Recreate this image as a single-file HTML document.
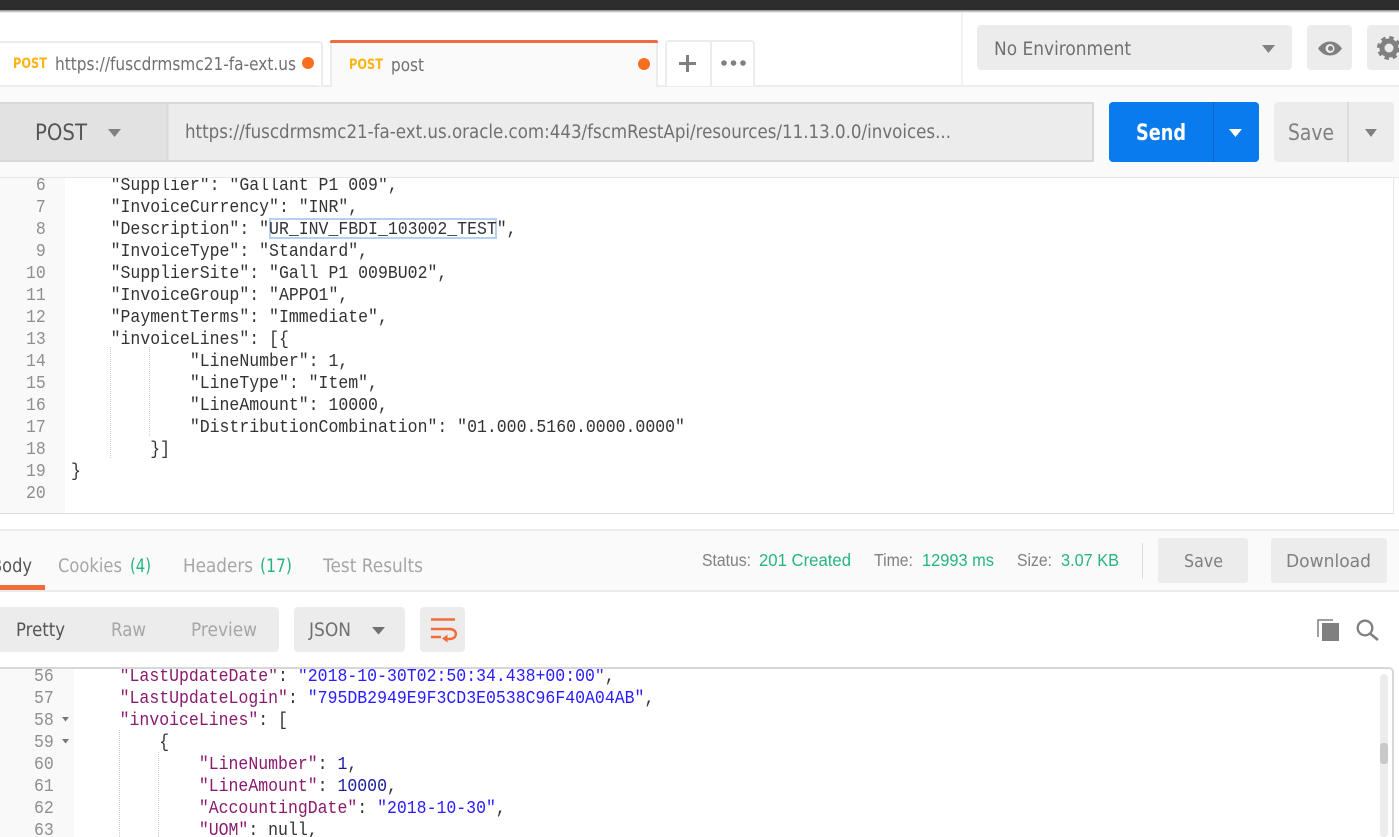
<!DOCTYPE html>
<html lang="en">
<head>
<meta charset="utf-8">
<title>Postman</title>
<style>
html,body{margin:0;padding:0;background:#fff;width:1399px;height:837px;overflow:hidden}
#page{position:relative;width:1399px;height:837px;overflow:hidden}
svg.bg{position:absolute;left:0;top:0}
svg text{font-family:"DejaVu Sans","Liberation Sans",sans-serif;fill:#707070}
svg text.ar{font-family:"Liberation Sans",Arial,sans-serif}
.clip{position:absolute;overflow:hidden}
pre{position:absolute;margin:0;font:18px/22px "Liberation Mono",monospace;color:#333;transform:scaleX(.9167);transform-origin:0 0;white-space:pre}
.num{color:#8f8f8f}
.k{color:#8a1b6e}
.s{color:#2a1cff}
.n{color:#1d1d9e}
.hl{position:absolute;left:269px;top:218px;width:224px;height:17px;border:2px solid #b5d0f2}
</style>
</head>
<body>
<div id="page">
<svg class="bg" width="1399" height="837" viewBox="0 0 1399 837" xmlns="http://www.w3.org/2000/svg">
<defs>
<linearGradient id="sh" x1="0" y1="0" x2="0" y2="1"><stop offset="0" stop-color="#888"/><stop offset="1" stop-color="#fff"/></linearGradient>
</defs>
<rect width="1399" height="837" fill="#fff"/>
<!-- top bar -->
<rect width="1399" height="10" fill="#2d2d2d"/>
<rect y="10" width="1399" height="3" fill="url(#sh)"/>

<!-- tab strip -->
<rect y="87" width="1399" height="91" fill="#fafafa"/>
<rect y="85" width="1399" height="2" fill="#ececec"/>
<path d="M-2 42H319a3 3 0 0 1 3 3V86" fill="#fff" stroke="#ececec" stroke-width="2"/>
<path d="M331 87V44a3 3 0 0 1 3-3H654a3 3 0 0 1 3 3V87" fill="#fafafa" stroke="#ececec" stroke-width="2"/>
<rect x="330" y="87" width="328" height="2" fill="#fafafa"/>
<path d="M330 43V42a2 2 0 0 1 2-2H656a2 2 0 0 1 2 2V43z" fill="#f26b3a"/>
<path d="M666 86V44a3 3 0 0 1 3-3H751a3 3 0 0 1 3 3V86M711 41V86" fill="#fff" stroke="#ececec" stroke-width="2"/>
<rect x="961.5" y="12" width="1" height="73" fill="#e6e6e6"/>

<text x="13" y="68" font-size="14" font-weight="bold" style="fill:#fdb414" textLength="34" lengthAdjust="spacingAndGlyphs">POST</text>
<text x="55" y="70" font-size="18" textLength="241" lengthAdjust="spacingAndGlyphs">https://fuscdrmsmc21-fa-ext.us</text>
<circle cx="308" cy="63" r="6" fill="#fa6e20"/>
<text x="349" y="69" font-size="14" font-weight="bold" style="fill:#fdb414" textLength="34" lengthAdjust="spacingAndGlyphs">POST</text>
<text x="391" y="71" font-size="18" textLength="33" lengthAdjust="spacingAndGlyphs">post</text>
<circle cx="644" cy="64" r="6" fill="#fa6e20"/>
<path d="M679 63.500H696M687.500 55V72" stroke="#808080" stroke-width="3" fill="none"/>
<circle cx="724" cy="63" r="2.800" fill="#808080"/><circle cx="733.500" cy="63" r="2.800" fill="#808080"/><circle cx="743" cy="63" r="2.800" fill="#808080"/>

<!-- environment -->
<rect x="977" y="25" width="315" height="45" rx="4" fill="#ececec"/>
<text x="994" y="55" font-size="18.500" textLength="137" lengthAdjust="spacingAndGlyphs">No Environment</text>
<path d="M1262 45H1275L1268.500 53z" fill="#808080"/>
<rect x="1307" y="25" width="45" height="45" rx="4" fill="#ececec"/>
<path d="M1318 48.500C1322 43 1326 41.500 1330 41.500S1338 43 1342 48.500C1338 54 1334 55.500 1330 55.500S1322 54 1318 48.500z" fill="#808080"/>
<circle cx="1330" cy="48.500" r="4.500" fill="#ececec"/>
<circle cx="1330.500" cy="48.500" r="2.500" fill="#808080"/>
<rect x="1367" y="25" width="45" height="45" rx="4" fill="#ececec"/>
<circle cx="1389" cy="48" r="7" fill="none" stroke="#808080" stroke-width="5"/>
<circle cx="1389" cy="48" r="10" fill="none" stroke="#808080" stroke-width="4" stroke-dasharray="4.200 3.650"/>

<!-- URL bar -->
<rect x="0" y="102" width="168" height="60" fill="#e2e2e2"/>
<rect x="167" y="102" width="927" height="60" fill="#ececec"/>
<path d="M0 103H1093V161H0M167.500 103V161" fill="none" stroke="#d8d8d8" stroke-width="2"/>
<text x="35" y="140" font-size="22" textLength="52" lengthAdjust="spacingAndGlyphs" style="fill:#555">POST</text>
<path d="M108 129H121L114.500 137z" fill="#808080"/>
<text x="185" y="138" font-size="18.500" textLength="766" lengthAdjust="spacingAndGlyphs">https://fuscdrmsmc21-fa-ext.us.oracle.com:443/fscmRestApi/resources/11.13.0.0/invoices...</text>

<rect x="1109" y="102" width="150" height="60" rx="4" fill="#097bed"/>
<rect x="1213" y="102" width="1" height="60" fill="#0669cf"/>
<text x="1136" y="140" font-size="22" font-weight="bold" textLength="50" lengthAdjust="spacingAndGlyphs" style="fill:#fff">Send</text>
<path d="M1229 129H1242L1235.500 137z" fill="#fff"/>
<rect x="1274" y="102" width="120" height="60" rx="4" fill="#ececec"/>
<rect x="1347" y="102" width="2" height="60" fill="#dcdcdc"/>
<text x="1288" y="140" font-size="22" textLength="46" lengthAdjust="spacingAndGlyphs" style="fill:#808080">Save</text>
<path d="M1365 129H1377L1371 137z" fill="#808080"/>
<rect y="177" width="1399" height="1" fill="#e6e6e6"/>

<!-- request editor -->
<rect y="178" width="65" height="335" fill="#f9f9f9"/>
<rect y="513" width="1393" height="1" fill="#dcdcdc"/>
<rect x="1393" y="178" width="1" height="336" fill="#e6e6e6"/>
<path d="M110.500 347V459" stroke="#ccc" stroke-dasharray="1 1"/>
<path d="M149.500 347V437" stroke="#ccc" stroke-dasharray="1 1"/>

<!-- response header -->
<rect y="530" width="1399" height="60" fill="#fafafa"/>
<rect y="529" width="1399" height="2" fill="#ececec"/>
<rect y="590" width="1399" height="2" fill="#ececec"/>
<rect y="585" width="45" height="5" fill="#f26b3a"/>
<text x="-9" y="572" font-size="18.500" textLength="41" lengthAdjust="spacingAndGlyphs" style="fill:#555">Body</text>
<text x="58" y="572" font-size="18.500" textLength="64" lengthAdjust="spacingAndGlyphs" style="fill:#a6a6a6">Cookies</text>
<text x="130" y="572" font-size="18.500" textLength="21" lengthAdjust="spacingAndGlyphs" style="fill:#26b47f">(4)</text>
<text x="183" y="572" font-size="18.500" textLength="70" lengthAdjust="spacingAndGlyphs" style="fill:#a6a6a6">Headers</text>
<text x="260" y="572" font-size="18.500" textLength="32" lengthAdjust="spacingAndGlyphs" style="fill:#26b47f">(17)</text>
<text x="323" y="572" font-size="18.500" textLength="100" lengthAdjust="spacingAndGlyphs" style="fill:#a6a6a6">Test Results</text>

<text class="ar" x="702" y="566" font-size="17.500" textLength="49" lengthAdjust="spacingAndGlyphs" style="fill:#808080">Status:</text>
<text class="ar" x="759" y="566" font-size="17.500" textLength="92" lengthAdjust="spacingAndGlyphs" style="fill:#26b47f">201 Created</text>
<text class="ar" x="874" y="566" font-size="17.500" textLength="39" lengthAdjust="spacingAndGlyphs" style="fill:#808080">Time:</text>
<text class="ar" x="922" y="566" font-size="17.500" textLength="72" lengthAdjust="spacingAndGlyphs" style="fill:#26b47f">12993 ms</text>
<text class="ar" x="1017" y="566" font-size="17.500" textLength="35" lengthAdjust="spacingAndGlyphs" style="fill:#808080">Size:</text>
<text class="ar" x="1061" y="566" font-size="17.500" textLength="58" lengthAdjust="spacingAndGlyphs" style="fill:#26b47f">3.07 KB</text>
<rect x="1142" y="543" width="1" height="36" fill="#dcdcdc"/>
<rect x="1158" y="538" width="90" height="45" rx="3" fill="#ececec"/>
<text x="1184" y="567" font-size="18" textLength="39" lengthAdjust="spacingAndGlyphs" style="fill:#808080">Save</text>
<rect x="1271" y="538" width="116" height="45" rx="3" fill="#ececec"/>
<text x="1286" y="567" font-size="18" textLength="85" lengthAdjust="spacingAndGlyphs" style="fill:#808080">Download</text>

<!-- response toolbar -->
<rect x="-6" y="607" width="285" height="45" rx="4" fill="#ececec"/>
<text x="16" y="636" font-size="18.500" textLength="49" lengthAdjust="spacingAndGlyphs" style="fill:#555">Pretty</text>
<text x="111" y="636" font-size="18.500" textLength="35" lengthAdjust="spacingAndGlyphs" style="fill:#a6a6a6">Raw</text>
<text x="191" y="636" font-size="18.500" textLength="66" lengthAdjust="spacingAndGlyphs" style="fill:#a6a6a6">Preview</text>
<rect x="294" y="607" width="111" height="45" rx="4" fill="#ececec"/>
<text x="309" y="636" font-size="18.500" textLength="42" lengthAdjust="spacingAndGlyphs" style="fill:#707070">JSON</text>
<path d="M372 627H385L378.500 634.500z" fill="#707070"/>
<rect x="420" y="607" width="45" height="45" rx="4" fill="#ececec"/>
<path d="M431 619.500H455M431 629H449.500C458 629 458 639 449.500 639H444M431 637H441" fill="none" stroke="#f26b3a" stroke-width="2.400"/>
<path d="M447.500 634.500V642.500L442 638.500z" fill="#f26b3a"/>

<path d="M1318 637V620H1333" fill="none" stroke="#808080" stroke-width="1.500"/>
<rect x="1322" y="623" width="17" height="18" fill="#808080"/>
<circle cx="1365" cy="628" r="7.300" fill="none" stroke="#808080" stroke-width="2.300"/>
<path d="M1370 633.500L1378 640" stroke="#808080" stroke-width="2.600"/>

<!-- response editor -->
<path d="M0 668H1389a4 4 0 0 1 4 4V837" fill="none" stroke="#d8d8d8" stroke-width="2"/>
<rect y="669" width="74" height="168" fill="#f9f9f9"/>
<path d="M119.500 730V837" stroke="#ccc" stroke-dasharray="1 1"/>
<path d="M158.500 752V837" stroke="#ccc" stroke-dasharray="1 1"/>
<path d="M62 717H69L65.500 721.500zM62 739H69L65.500 743.500z" fill="#777"/>
<rect x="1380" y="674" width="8" height="163" rx="4" fill="#ececec"/>
<rect x="1380" y="743" width="8" height="21" rx="3" fill="#c8c8c8"/>
</svg>

<div class="hl"></div>

<div class="clip" style="left:0;top:178px;width:65px;height:335px">
<pre class="num" style="left:25.500px;top:-3px"> 6
 7
 8
 9
10
11
12
13
14
15
16
17
18
19
20</pre>
</div>
<div class="clip" style="left:66px;top:178px;width:1320px;height:335px">
<pre style="left:4.500px;top:-3px">    "Supplier": "Gallant P1 009",
    "InvoiceCurrency": "INR",
    "Description": "UR_INV_FBDI_103002_TEST",
    "InvoiceType": "Standard",
    "SupplierSite": "Gall P1 009BU02",
    "InvoiceGroup": "APPO1",
    "PaymentTerms": "Immediate",
    "invoiceLines": [{
            "LineNumber": 1,
            "LineType": "Item",
            "LineAmount": 10000,
            "DistributionCombination": "01.000.5160.0000.0000"
        }]
}</pre>
</div>

<div class="clip" style="left:0;top:669px;width:60px;height:168px">
<pre class="num" style="left:33.500px;top:-3px">56
57
58
59
60
61
62
63</pre>
</div>
<div class="clip" style="left:75px;top:669px;width:1300px;height:168px">
<pre style="left:4.500px;top:-3px">    <span class="k">"LastUpdateDate"</span>: <span class="s">"2018-10-30T02:50:34.438+00:00"</span>,
    <span class="k">"LastUpdateLogin"</span>: <span class="s">"795DB2949E9F3CD3E0538C96F40A04AB"</span>,
    <span class="k">"invoiceLines"</span>: [
        {
            <span class="k">"LineNumber"</span>: <span class="n">1</span>,
            <span class="k">"LineAmount"</span>: <span class="n">10000</span>,
            <span class="k">"AccountingDate"</span>: <span class="s">"2018-10-30"</span>,
            <span class="k">"UOM"</span>: null,</pre>
</div>
</div>
</body>
</html>
